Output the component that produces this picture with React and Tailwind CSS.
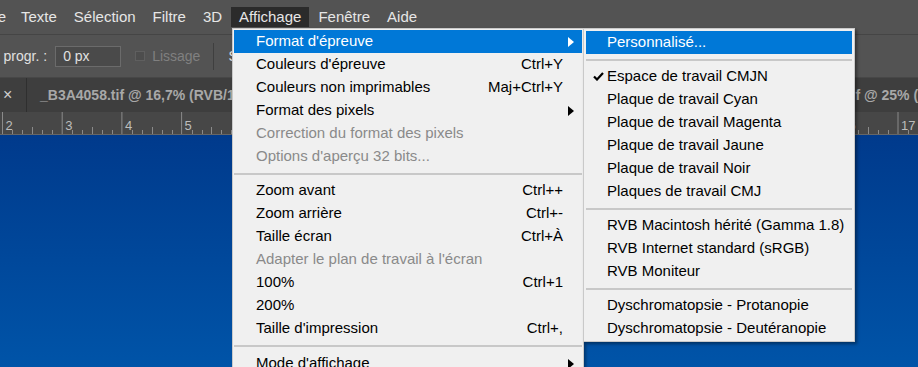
import React from "react";

const font = "font-['Liberation_Sans',Arial,sans-serif]";

const topMenus = ["Texte", "Sélection", "Filtre", "3D", "Affichage", "Fenêtre", "Aide"];

const mainItems = [
  { label: "Format d'épreuve", sub: true, active: true },
  { label: "Couleurs d'épreuve", key: "Ctrl+Y" },
  { label: "Couleurs non imprimables", key: "Maj+Ctrl+Y" },
  { label: "Format des pixels", sub: true },
  { label: "Correction du format des pixels", disabled: true },
  { label: "Options d'aperçu 32 bits...", disabled: true },
  { sep: true },
  { label: "Zoom avant", key: "Ctrl++" },
  { label: "Zoom arrière", key: "Ctrl+-" },
  { label: "Taille écran", key: "Ctrl+À" },
  { label: "Adapter le plan de travail à l'écran", disabled: true },
  { label: "100%", key: "Ctrl+1" },
  { label: "200%" },
  { label: "Taille d'impression", key: "Ctrl+," },
  { sep: true, tall: true },
  { label: "Mode d'affichage", sub: true },
];

const subItems = [
  { label: "Personnalisé...", active: true },
  { sep: true },
  { label: "Espace de travail CMJN", checked: true },
  { label: "Plaque de travail Cyan" },
  { label: "Plaque de travail Magenta" },
  { label: "Plaque de travail Jaune" },
  { label: "Plaque de travail Noir" },
  { label: "Plaques de travail CMJ" },
  { sep: true },
  { label: "RVB Macintosh hérité (Gamma 1.8)" },
  { label: "RVB Internet standard (sRGB)" },
  { label: "RVB Moniteur" },
  { sep: true },
  { label: "Dyschromatopsie - Protanopie" },
  { label: "Dyschromatopsie - Deutéranopie" },
];

const Arrow = ({ white }) => (
  <svg width="7" height="10" viewBox="0 0 7 10" className="shrink-0">
    <path d="M0 0 L6 5 L0 10 Z" fill={white ? "#ffffff" : "#000000"} />
  </svg>
);

const Check = () => (
  <svg width="11" height="9" viewBox="0 0 11 9">
    <path d="M1 4.5 L4 7.5 L10 1" stroke="#000" strokeWidth="2.2" fill="none" />
  </svg>
);

const Ruler = () => {
  const majors = [];
  for (let i = 0; i < 17; i++) majors.push(i);
  return (
    <svg width="918" height="22" className="block">
      {majors.map((i) => {
        const x = 2.5 + i * 59.7;
        return (
          <g key={i}>
            <line x1={x} y1="0" x2={x} y2="22" stroke="#8a8a8a" strokeWidth="1" />
            <text x={x + 3} y="18" fill="#bdbdbd" fontSize="13" fontFamily="Liberation Sans, Arial, sans-serif">
              {i + 2}
            </text>
            {[1, 2, 3, 4, 5].map((k) => {
              const mx = Math.round(x + (k * 59.7) / 6) + 0.5;
              return (
                <line
                  key={k}
                  x1={mx}
                  y1={k === 3 ? 15 : 18}
                  x2={mx}
                  y2="22"
                  stroke="#8a8a8a"
                  strokeWidth="1"
                />
              );
            })}
          </g>
        );
      })}
    </svg>
  );
};

export default function App() {
  return (
    <div className={`relative w-[918px] h-[367px] overflow-hidden flex flex-col bg-[#535353] ${font}`}>
      {/* barre de menus */}
      <div className="h-[35px] shrink-0 flex items-center gap-[1px] text-[15px] text-[#e6e6e6] border-b border-[#454545]">
        <span className="w-[6px] overflow-hidden flex justify-end mr-[6px]">e</span>
        {topMenus.map((m) => (
          <span
            key={m}
            className={`px-[8px] h-[20px] flex items-center ${
              m === "Affichage" ? "bg-[#2b2b2b]" : ""
            }`}
          >
            {m}
          </span>
        ))}
      </div>

      {/* barre d'options */}
      <div className="h-[42px] shrink-0 flex items-center text-[14px] text-[#e0e0e0]">
        <span className="ml-[-5px] whitespace-nowrap">r progr. :</span>
        <div className="ml-[8px] w-[66px] h-[21px] border border-[#6b6b6b] bg-[#4a4a4a] flex items-center pl-[7px]">
          0 px
        </div>
        <div className="ml-[14px] w-[10px] h-[10px] border border-[#5f5f5f] bg-[#4d4d4d]" />
        <span className="ml-[7px] text-[#808080]">Lissage</span>
        <div className="ml-[13px] w-px h-[27px] bg-[#3f3f3f]" />
        <span className="ml-[14px]">St</span>
      </div>

      {/* onglets */}
      <div className="h-[35px] shrink-0 flex items-center bg-[#3e3e3e] border-t border-[#474747] text-[14px] font-bold text-[#a8a8a8]">
        <span className="w-[27px] shrink-0 h-full flex items-center pl-[3px] border-r border-[#2f2f2f] text-[16px] font-normal text-[#cfcfcf]">
          ×
        </span>
        <span className="pl-[13px] w-[700px] shrink-0 whitespace-nowrap">_B3A4058.tif @ 16,7% (RVB/16)</span>
        <span className="pl-[49px] shrink-0 whitespace-nowrap">_B3A4061.tif @ 25% (RVB/8)</span>
      </div>

      {/* règle */}
      <div className="h-[23px] shrink-0 bg-[#474747] border-b border-[#666666]">
        <Ruler />
      </div>

      {/* zone de travail */}
      <div className="flex-1 bg-gradient-to-b from-[#003a8c] to-[#0054a8]" />

      {/* menu Affichage */}
      <div className="absolute left-[232px] top-[28px] w-[352px] bg-[#f0f0f0] border border-[#c9c9c9] p-[1px] text-[15px] text-black shadow-[2px_2px_3px_rgba(0,0,0,0.35)]">
        {mainItems.map((it, i) =>
          it.sep ? (
            <div key={i} className={`${it.tall ? "h-[12px]" : "h-[11px]"} flex items-center`}>
              <div className="w-full h-[2px] bg-[#c8c8c8]" />
            </div>
          ) : (
            <div
              key={i}
              className={`h-[23px] flex items-center pl-[22px] pr-[4px] ${
                it.active ? "bg-[#0078d7] text-white" : it.disabled ? "text-[#8a8a8a]" : ""
              }`}
            >
              <span className="flex-1 whitespace-nowrap">{it.label}</span>
              {it.key && <span className="mr-[15px] whitespace-nowrap">{it.key}</span>}
              {it.sub && (
                <span className="mr-[3px]">
                  <Arrow white={it.active} />
                </span>
              )}
            </div>
          )
        )}
      </div>

      {/* sous-menu Format d'épreuve */}
      <div className="absolute left-[583px] top-[28px] w-[272px] bg-[#f0f0f0] border border-[#c9c9c9] pt-[2px] pb-[1px] px-[2px] text-[15px] text-black shadow-[2px_2px_3px_rgba(0,0,0,0.4)]">
        {subItems.map((it, i) =>
          it.sep ? (
            <div key={i} className="h-[11px] flex items-center">
              <div className="w-full h-[2px] bg-[#c8c8c8]" />
            </div>
          ) : (
            <div
              key={i}
              className={`h-[23px] flex items-center ${it.active ? "bg-[#0078d7] text-white" : ""}`}
            >
              <span className="w-[21px] flex justify-center pl-[3px]">{it.checked && <Check />}</span>
              <span className="whitespace-nowrap">{it.label}</span>
            </div>
          )
        )}
      </div>
    </div>
  );
}
